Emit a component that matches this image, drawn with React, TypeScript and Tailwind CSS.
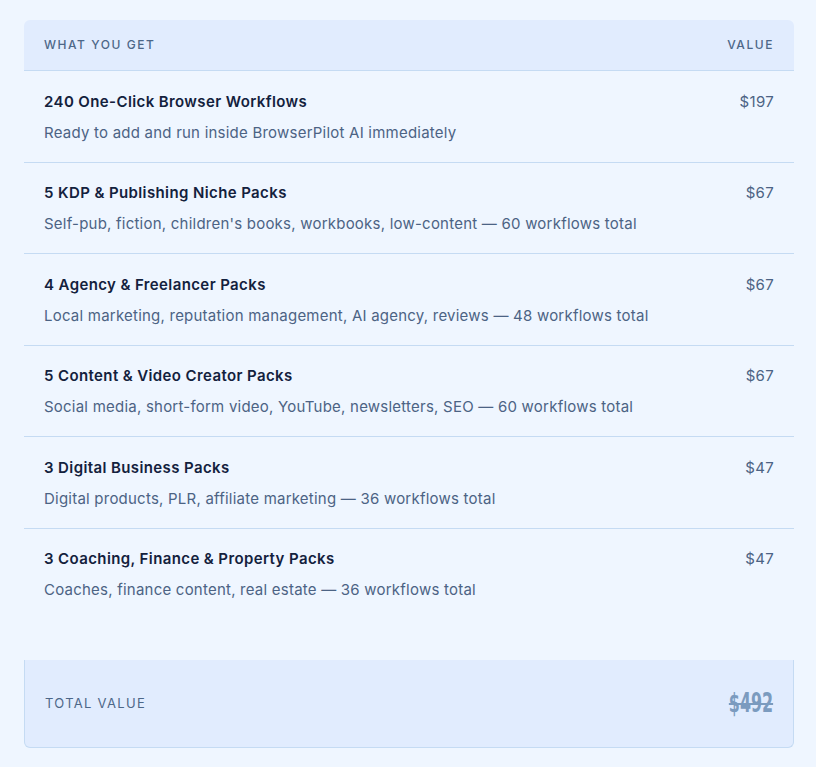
const items = [
  {
    title: "240 One-Click Browser Workflows",
    desc: "Ready to add and run inside BrowserPilot AI immediately",
    value: "$197",
  },
  {
    title: "5 KDP & Publishing Niche Packs",
    desc: "Self-pub, fiction, children's books, workbooks, low-content — 60 workflows total",
    value: "$67",
  },
  {
    title: "4 Agency & Freelancer Packs",
    desc: "Local marketing, reputation management, AI agency, reviews — 48 workflows total",
    value: "$67",
  },
  {
    title: "5 Content & Video Creator Packs",
    desc: "Social media, short-form video, YouTube, newsletters, SEO — 60 workflows total",
    value: "$67",
  },
  {
    title: "3 Digital Business Packs",
    desc: "Digital products, PLR, affiliate marketing — 36 workflows total",
    value: "$47",
  },
  {
    title: "3 Coaching, Finance & Property Packs",
    desc: "Coaches, finance content, real estate — 36 workflows total",
    value: "$47",
  },
];

const App = () => {
  return (
    <div
      className="min-h-screen w-full bg-[#eff6ff] pt-5 pb-5"
      style={{ fontFamily: "Inter, 'Noto Sans', sans-serif" }}
    >
      <div className="ml-6 w-[770px]">
        <div className="h-[51px] flex items-center justify-between px-5 bg-[#e1ecfe] rounded-t-md border-b border-[#c5dbf3] text-[12px] font-medium tracking-[0.13em] text-[#4d6788]">
          <span>WHAT YOU GET</span>
          <span>VALUE</span>
        </div>
        {items.map((item, i) => (
          <div
            key={item.title}
            className={
              "flex justify-between px-5 pt-[20.5px] pb-[18px] " +
              (i < items.length - 1 ? "border-b border-[#c5dbf3]" : "")
            }
          >
            <div>
              <div className="text-[15px] leading-5 font-semibold tracking-[0.026em] text-[#13213d]">
                {item.title}
              </div>
              <div className="mt-[10px] text-[15px] leading-[22px] tracking-[0.015em] text-[#4c6384]">
                {item.desc}
              </div>
            </div>
            <div className="text-[15px] leading-5 tracking-[0.02em] text-[#4c6384]">{item.value}</div>
          </div>
        ))}
        <div className="mt-[41px] h-[88px] flex items-center justify-between px-5 bg-[#e1ecfe] border-x border-b border-[#c5dbf3] rounded-b-md">
          <span className="text-[13px] tracking-[0.1em] text-[#4d6788]">TOTAL VALUE</span>
          <span
            className="inline-block origin-right scale-x-[0.68] text-[26px] font-bold line-through text-[#7b9bbf]"
            style={{ fontFamily: "'DejaVu Sans Condensed', 'Liberation Sans Narrow', sans-serif" }}
          >
            $492
          </span>
        </div>
      </div>
    </div>
  );
};

export default App;
